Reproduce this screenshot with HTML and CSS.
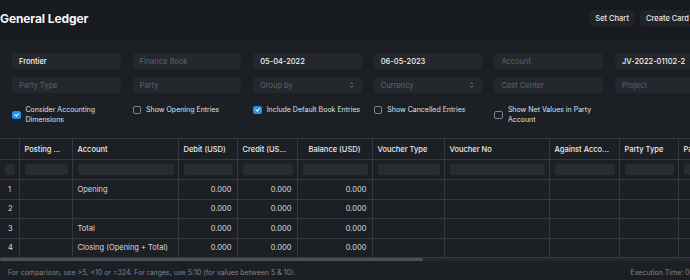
FILE: index.html
```html
<!DOCTYPE html>
<html lang="en">
<head>
    <meta charset="UTF-8">
    <meta name="viewport" content="width=device-width, initial-scale=1.0">
    <title>General Ledger</title>
    <link rel="stylesheet" href="styles.css">
</head>
<body>
<div class="page">
    <div class="page-head">
        <h1>General Ledger</h1>
        <div class="head-actions">
            <button class="btn">Set Chart</button>
            <button class="btn">Create Card</button>
        </div>
    </div>

    <div class="card">
        <div class="filters">
            <div class="field value">Frontier</div>
            <div class="field">Finance Book</div>
            <div class="field value">05-04-2022</div>
            <div class="field value">06-05-2023</div>
            <div class="field">Account</div>
            <div class="field value">JV-2022-01102-2</div>

            <div class="field">Party Type</div>
            <div class="field">Party</div>
            <div class="field select">Group by
                <svg class="caret" width="5" height="8" viewBox="0 0 5 8"><path d="M1 3 L2.5 1.5 L4 3 M1 5 L2.5 6.5 L4 5" fill="none" stroke="#7d838b" stroke-width="0.8"/></svg>
            </div>
            <div class="field select">Currency
                <svg class="caret" width="5" height="8" viewBox="0 0 5 8"><path d="M1 3 L2.5 1.5 L4 3 M1 5 L2.5 6.5 L4 5" fill="none" stroke="#7d838b" stroke-width="0.8"/></svg>
            </div>
            <div class="field">Cost Center</div>
            <div class="field">Project</div>
        </div>

        <div class="checks">
            <div class="check"><span class="box on"></span><span>Consider Accounting<br>Dimensions</span></div>
            <div class="check"><span class="box"></span><span>Show Opening Entries</span></div>
            <div class="check"><span class="box on"></span><span>Include Default Book Entries</span></div>
            <div class="check"><span class="box"></span><span>Show Cancelled Entries</span></div>
            <div class="check"><span class="box"></span><span>Show Net Values in Party<br>Account</span></div>
        </div>

        <table class="report">
            <colgroup>
                <col style="width:19px"><col style="width:53px"><col style="width:106px"><col style="width:59px">
                <col style="width:60px"><col style="width:75px"><col style="width:72px"><col style="width:105px">
                <col style="width:70px"><col style="width:59px"><col style="width:60px">
            </colgroup>
            <tr class="head">
                <th></th><th>Posting ...</th><th>Account</th><th>Debit (USD)</th><th>Credit (US...</th>
                <th class="num">Balance (USD)</th><th>Voucher Type</th><th>Voucher No</th><th>Against Acco...</th><th>Party Type</th><th>Party</th>
            </tr>
            <tr class="filter">
                <td><i></i></td><td><i></i></td><td><i></i></td><td><i></i></td><td><i></i></td><td><i></i></td>
                <td><i></i></td><td><i></i></td><td><i></i></td><td><i></i></td><td><i></i></td>
            </tr>
            <tr>
                <td class="idx">1</td><td></td><td>Opening</td><td class="num">0.000</td><td class="num">0.000</td><td class="num">0.000</td>
                <td></td><td></td><td></td><td></td><td></td>
            </tr>
            <tr>
                <td class="idx">2</td><td></td><td></td><td class="num">0.000</td><td class="num">0.000</td><td class="num">0.000</td>
                <td></td><td></td><td></td><td></td><td></td>
            </tr>
            <tr>
                <td class="idx">3</td><td></td><td>Total</td><td class="num">0.000</td><td class="num">0.000</td><td class="num">0.000</td>
                <td></td><td></td><td></td><td></td><td></td>
            </tr>
            <tr>
                <td class="idx">4</td><td></td><td>Closing (Opening + Total)</td><td class="num">0.000</td><td class="num">0.000</td><td class="num">0.000</td>
                <td></td><td></td><td></td><td></td><td></td>
            </tr>
        </table>
        <div class="scrollbar"><div class="thumb"></div></div>

        <div class="report-foot">
            <span>For comparison, use &gt;5, &lt;10 or =324. For ranges, use 5:10 (for values between 5 &amp; 10).</span>
            <span>Execution Time: 0.04 sec</span>
        </div>
    </div>
</div>
</body>
</html>
```

FILE: styles.css
```css
body {
    margin: 0;
    padding: 0;
    background-color: #171a1f;
    font-family: Inter, "Noto Sans", sans-serif;
    color: #e6e8eb;
    overflow: hidden;
}
.page {
    width: 740px;
}
.page-head {
    width: 695px;
    height: 36px;
    display: flex;
    justify-content: space-between;
    align-items: center;
}
.page-head h1 {
    margin: 0;
    font-size: 12px;
    font-weight: 700;
    color: #f5f6f7;
    letter-spacing: -0.1px;
}
.head-actions {
    display: flex;
    gap: 5px;
}
.btn {
    height: 16px;
    padding: 0 6px;
    border: none;
    border-radius: 4px;
    background-color: #20242a;
    color: #e6e8eb;
    font-family: inherit;
    font-size: 7.5px;
    font-weight: 500;
}
.card {
    margin-top: 4px;
    background-color: #1c1f24;
    border-radius: 6px;
    padding-top: 13px;
    height: 260px;
}
.filters {
    display: grid;
    grid-template-columns: repeat(6, 108.6px);
    column-gap: 12px;
    row-gap: 8px;
    padding-left: 12px;
}
.field {
    height: 16px;
    display: flex;
    align-items: center;
    padding-left: 7px;
    border-radius: 4px;
    background-color: #24282e;
    font-size: 7.5px;
    color: #5d646d;
}
.field.value {
    color: #f2f3f5;
    font-weight: 500;
}
.field.select {
    justify-content: space-between;
    padding-right: 8px;
}
.checks {
    display: grid;
    grid-template-columns: repeat(6, 108.6px);
    column-gap: 12px;
    align-items: start;
    height: 20px;
    padding-left: 12px;
    margin-top: 12px;
}
.check {
    display: flex;
    align-items: center;
    gap: 5px;
    font-size: 7px;
    line-height: 10px;
    color: #dfe2e6;
}
.box {
    width: 6.5px;
    height: 6.5px;
    flex: none;
    border: 0.8px solid #7d838b;
    border-radius: 2px;
}
.box.on {
    border-color: #2490ef;
    background-color: #2490ef;
    position: relative;
}
.box.on::after {
    content: "";
    position: absolute;
    left: 2.2px;
    top: 0.6px;
    width: 1.6px;
    height: 3.4px;
    border: solid #fff;
    border-width: 0 1px 1px 0;
    transform: rotate(40deg);
}
.report {
    margin-top: 13px;
    border-collapse: collapse;
    table-layout: fixed;
    width: 738px;
    font-size: 7.5px;
}
.report th, .report td {
    border: 1px solid #343940;
    padding: 0 5px;
    white-space: nowrap;
    overflow: hidden;
    text-align: left;
}
.report tr > :first-child {
    border-left: none;
}
.report th {
    height: 20px;
    font-weight: 500;
    color: #e9ebee;
}
.report th.num {
    text-align: center;
}
.report td {
    height: 18.5px;
    color: #d9dce0;
}
.report td.num {
    text-align: right;
}
.report td.idx {
    padding-left: 8px;
}
.report .filter td {
    height: 19px;
    padding: 0 4px 0 5px;
}
.report .filter i {
    display: block;
    height: 11px;
    border-radius: 3px;
    background-color: #282c33;
}
.scrollbar {
    height: 3px;
    width: 738px;
    background-color: #23272d;
}
.thumb {
    width: 423px;
    height: 3px;
    border-radius: 2px;
    background-color: #4b5058;
}
.report-foot {
    display: flex;
    justify-content: space-between;
    width: 706px;
    padding: 7px 0 0 8px;
    font-size: 7px;
    color: #7f868f;
}
```
